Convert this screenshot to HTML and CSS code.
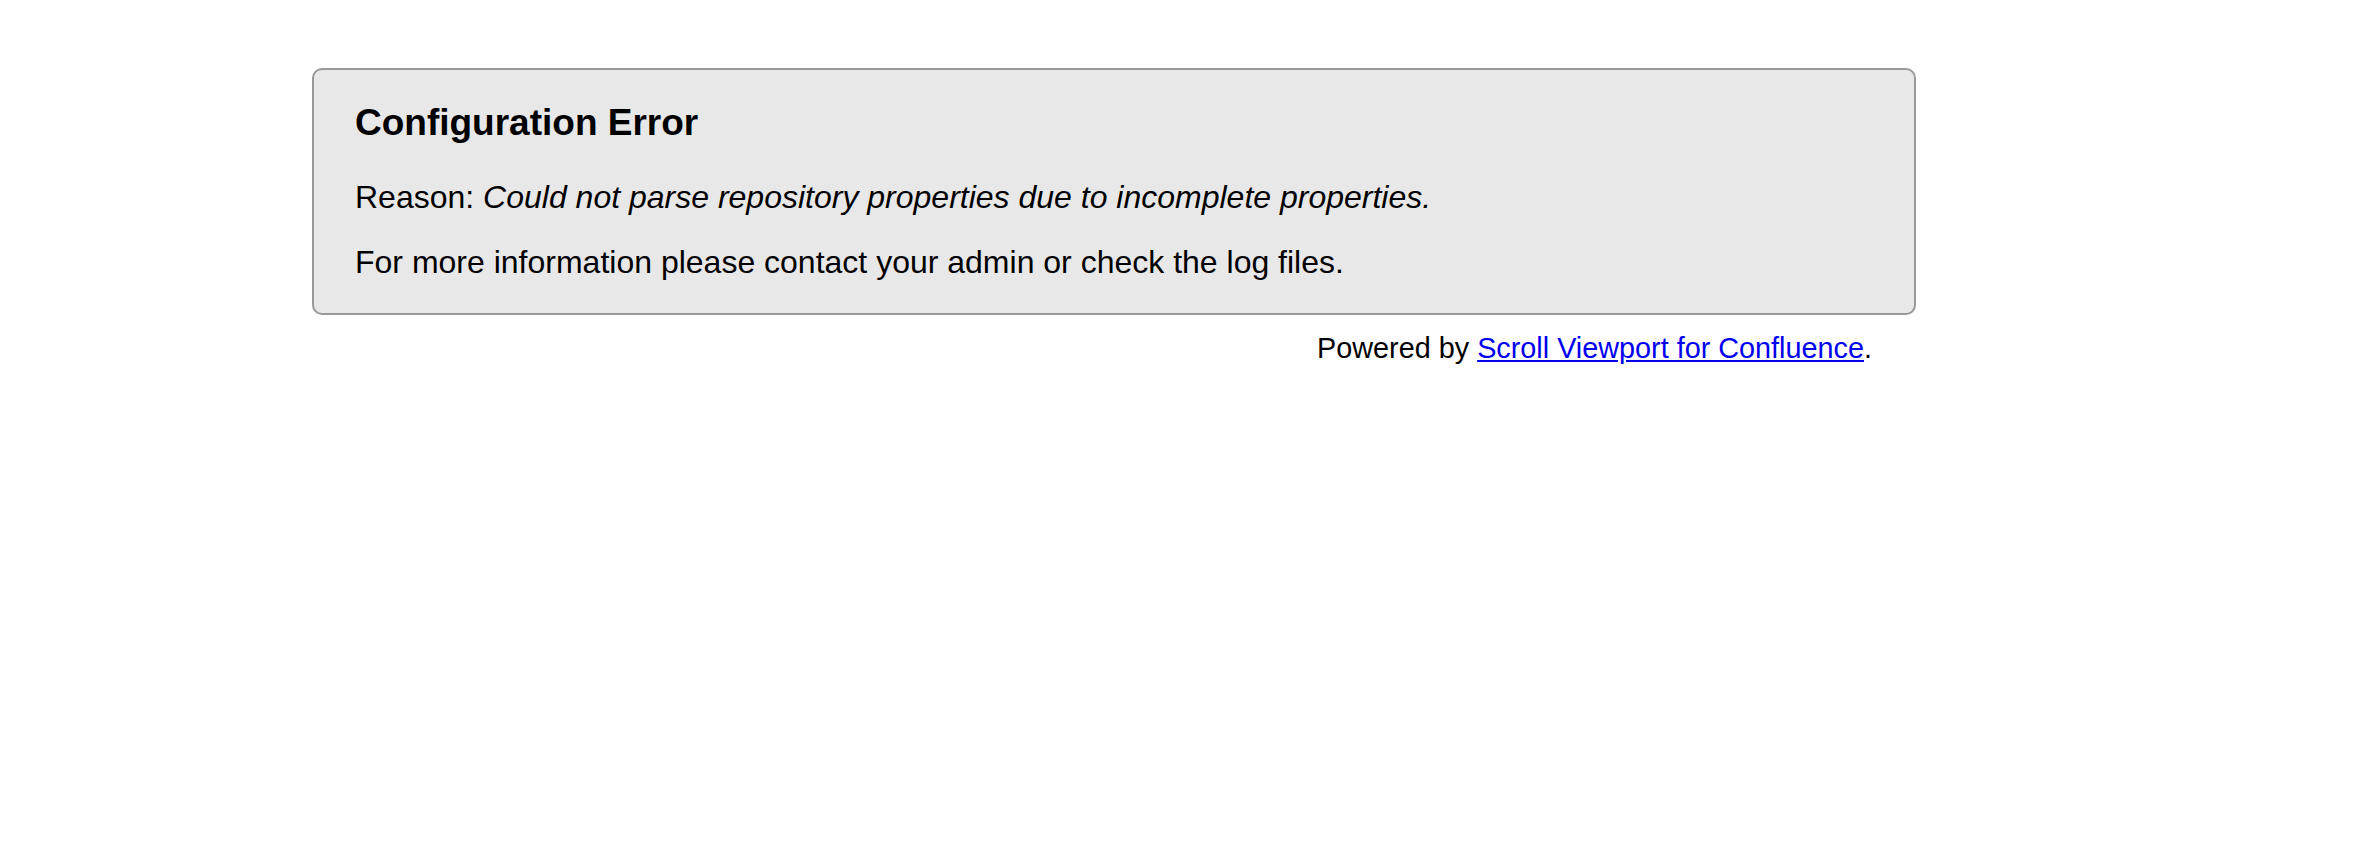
FILE: index.html
```html
<!DOCTYPE html>
<html>
<head>
<meta charset="utf-8">
<link rel="stylesheet" href="styles.css">
</head>
<body>
<div class="page">
  <div class="error-box">
    <h1 class="title">Configuration Error</h1>
    <p class="reason">Reason: <em>Could not parse repository properties due to incomplete properties.</em></p>
    <p class="info">For more information please contact your admin or check the log files.</p>
  </div>
  <div class="footer">Powered by <a href="#" class="link">Scroll Viewport for Confluence</a>.</div>
</div>
</body>
</html>
```

FILE: styles.css
```css
html, body {
  margin: 0;
  padding: 0;
  background: #fefefe;
}
body {
  font-family: "Liberation Sans", Arial, sans-serif;
  color: #000;
}
.page {
  margin-left: 312px;
  padding-top: 68px;
  width: 1604px;
}
.error-box {
  background: #e8e8e8;
  border: 2px solid #999;
  border-radius: 10px;
  padding: 1px 40px 32px 41px;
}
.title {
  font-size: 37px;
  font-weight: bold;
  line-height: 42px;
  margin: 31px 0 0 0;
}
.reason {
  font-size: 32px;
  line-height: 37px;
  margin: 35px 0 0 0;
}
.info {
  font-size: 32px;
  line-height: 37px;
  margin: 28px 0 0 0;
}
.footer {
  font-size: 28.8px;
  line-height: 32px;
  text-align: right;
  padding-right: 44px;
  margin-top: 17px;
}
.link {
  color: #0000ee;
  text-decoration: underline;
}
```
